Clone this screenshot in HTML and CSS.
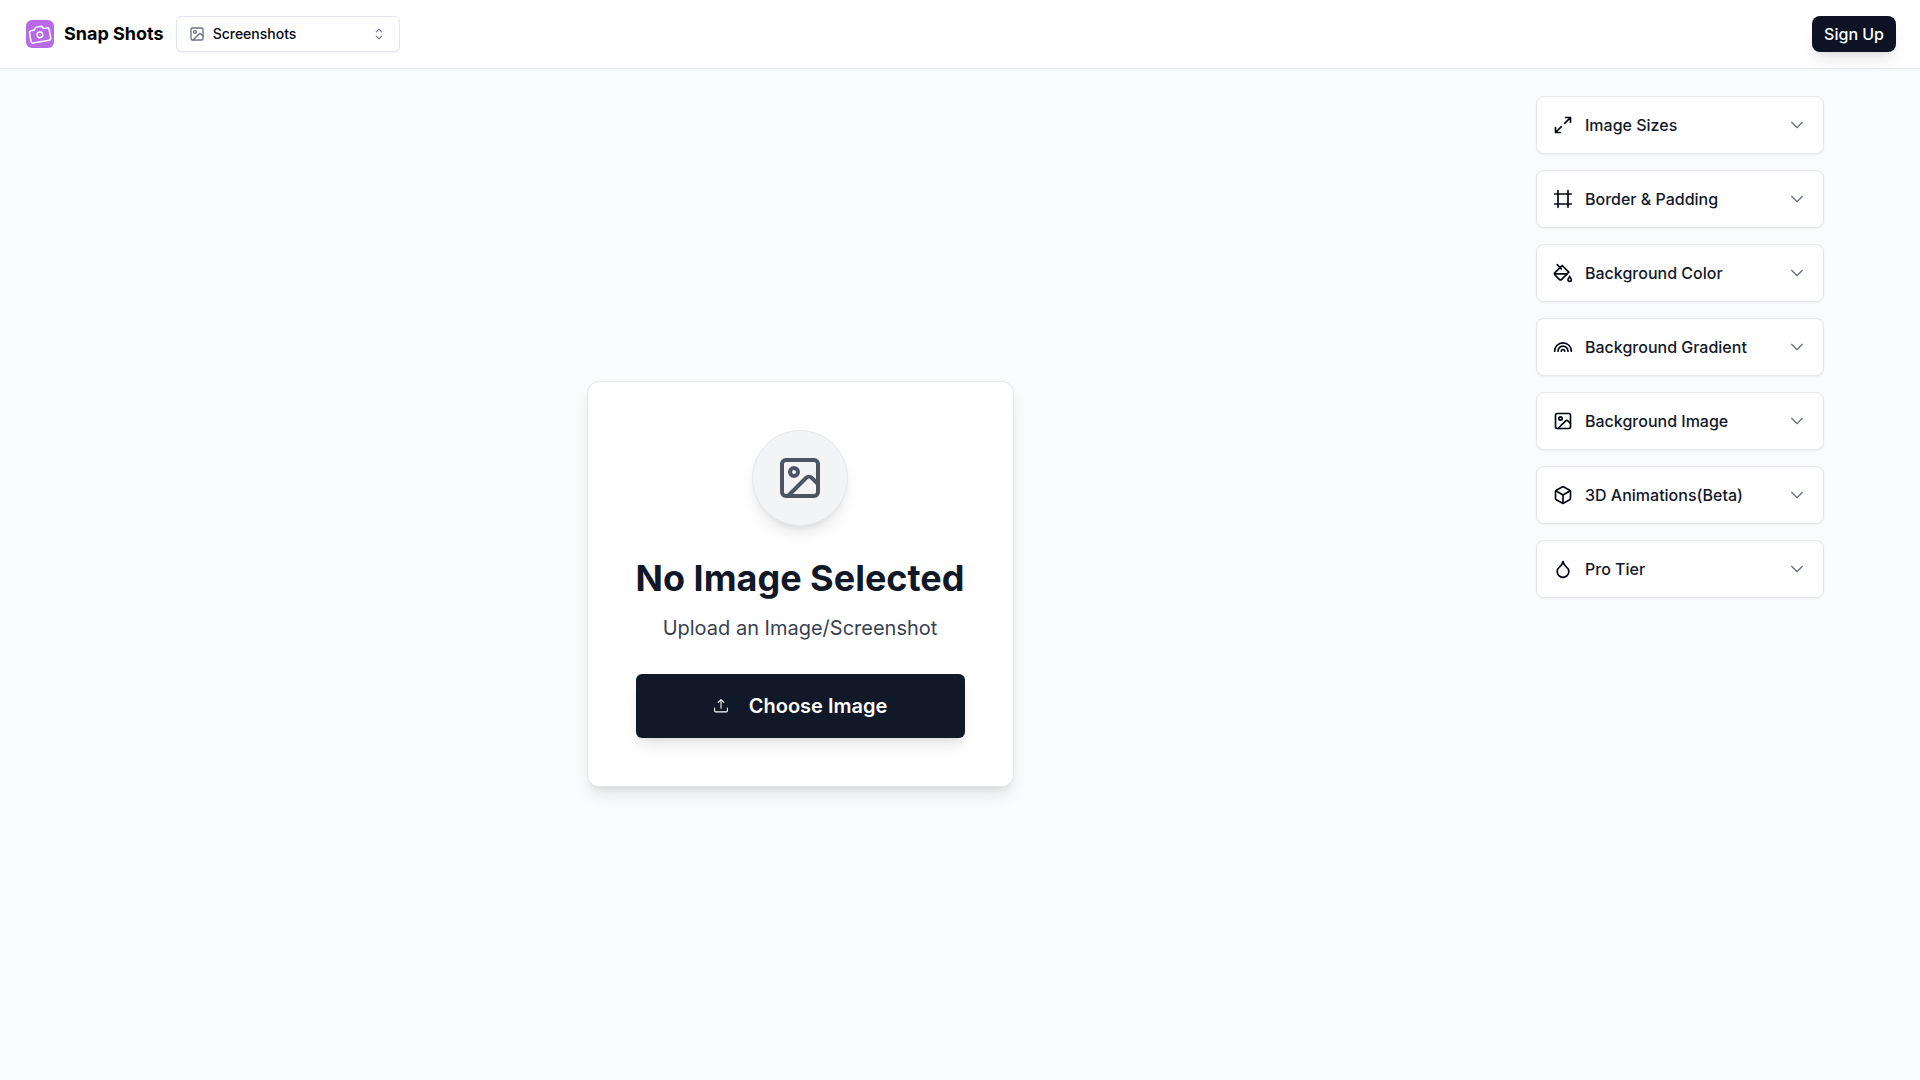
FILE: index.html
```html
<!DOCTYPE html>
<html lang="en">
<head>
    <meta charset="UTF-8">
    <title>Snap Shots</title>
    <meta name="viewport" content="width=device-width, initial-scale=1.0">
    <link rel="stylesheet" href="styles.css">
</head>
<body>
    <header class="navbar">
        <a href="#" class="brand">
            <svg class="logo" viewBox="0 0 28 28">
                <rect class="logo-bg" width="28" height="28" rx="6"/>
                <g transform="rotate(-10 14 15)">
                    <path d="M6 9.2h3.3l1.6-2.5h6.2l1.6 2.5H22a2 2 0 0 1 2 2v8.6a2 2 0 0 1-2 2H6a2 2 0 0 1-2-2v-8.6a2 2 0 0 1 2-2z"/>
                    <circle cx="14" cy="14.8" r="2.8"/>
                </g>
            </svg>
            <span>Snap Shots</span>
        </a>
        <div class="mode">
            <svg class="mode-icon" viewBox="0 0 24 24"><rect x="3" y="3" width="18" height="18" rx="2"/><circle cx="9" cy="9" r="2"/><path d="m21 15-3.1-3.1a2 2 0 0 0-2.8 0L6 21"/></svg>
            <select class="mode-select" aria-label="Mode">
                <option>Screenshots</option>
            </select>
            <svg class="mode-caret" viewBox="0 0 15 15"><path d="m4.9 5.6 2.6-2.6 2.6 2.6M4.9 9.4l2.6 2.6 2.6-2.6"/></svg>
        </div>
        <button type="button" class="signup">Sign Up</button>
    </header>

    <main class="workspace">
        <section class="stage">
            <div class="upload-card">
                <div class="upload-badge">
                    <svg viewBox="0 0 24 24"><rect x="3" y="3" width="18" height="18" rx="2"/><circle cx="9" cy="9" r="2"/><path d="m21 15-3.1-3.1a2 2 0 0 0-2.8 0L6 21"/></svg>
                </div>
                <h1>No Image Selected</h1>
                <p>Upload an Image/Screenshot</p>
                <button type="button" class="choose">
                    <svg viewBox="0 0 15 15"><path d="M4.8 4.2 7.5 1.5l2.7 2.7M7.5 1.6V9.5M1.5 9.5V12a1 1 0 0 0 1 1h10a1 1 0 0 0 1-1V9.5"/></svg>
                    Choose Image
                </button>
            </div>
        </section>

        <aside class="options">
            <button type="button" class="option" aria-expanded="false">
                <svg class="option-icon" viewBox="0 0 24 24"><path d="M15 3h6v6M9 21H3v-6M21 3l-7 7M3 21l7-7"/></svg>
                <span>Image Sizes</span>
                <svg class="chevron" viewBox="0 0 15 15"><path d="m3.5 5.5 4 4 4-4"/></svg>
            </button>
            <button type="button" class="option" aria-expanded="false">
                <svg class="option-icon" viewBox="0 0 24 24"><path d="M22 6H2M22 18H2M6 2v20M18 2v20"/></svg>
                <span>Border &amp; Padding</span>
                <svg class="chevron" viewBox="0 0 15 15"><path d="m3.5 5.5 4 4 4-4"/></svg>
            </button>
            <button type="button" class="option" aria-expanded="false">
                <svg class="option-icon" viewBox="0 0 24 24"><path d="m19 11-8-8-8.6 8.6a2 2 0 0 0 0 2.8l5.2 5.2c.8.8 2 .8 2.8 0L19 11Z"/><path d="m5 2 5 5M2 13h15"/><path d="M22 20a2 2 0 1 1-4 0c0-1.6 1.7-2.4 2-4 .3 1.6 2 2.4 2 4Z"/></svg>
                <span>Background Color</span>
                <svg class="chevron" viewBox="0 0 15 15"><path d="m3.5 5.5 4 4 4-4"/></svg>
            </button>
            <button type="button" class="option" aria-expanded="false">
                <svg class="option-icon" viewBox="0 0 24 24"><path d="M22 17a10 10 0 0 0-20 0M6 17a6 6 0 0 1 12 0M10 17a2 2 0 0 1 4 0"/></svg>
                <span>Background Gradient</span>
                <svg class="chevron" viewBox="0 0 15 15"><path d="m3.5 5.5 4 4 4-4"/></svg>
            </button>
            <button type="button" class="option" aria-expanded="false">
                <svg class="option-icon" viewBox="0 0 24 24"><rect x="3" y="3" width="18" height="18" rx="2"/><circle cx="9" cy="9" r="2"/><path d="m21 15-3.1-3.1a2 2 0 0 0-2.8 0L6 21"/></svg>
                <span>Background Image</span>
                <svg class="chevron" viewBox="0 0 15 15"><path d="m3.5 5.5 4 4 4-4"/></svg>
            </button>
            <button type="button" class="option" aria-expanded="false">
                <svg class="option-icon" viewBox="0 0 24 24"><path d="M21 8a2 2 0 0 0-1-1.7l-7-4a2 2 0 0 0-2 0l-7 4A2 2 0 0 0 3 8v8a2 2 0 0 0 1 1.7l7 4a2 2 0 0 0 2 0l7-4A2 2 0 0 0 21 16Z"/><path d="m3.3 7 8.7 5 8.7-5M12 22V12"/></svg>
                <span>3D Animations(Beta)</span>
                <svg class="chevron" viewBox="0 0 15 15"><path d="m3.5 5.5 4 4 4-4"/></svg>
            </button>
            <button type="button" class="option" aria-expanded="false">
                <svg class="option-icon" viewBox="0 0 24 24"><path d="M12 22a7 7 0 0 0 7-7c0-2-1-3.9-3-5.5s-3.5-4-4-6.5c-.5 2.5-2 4.9-4 6.5C6 11.1 5 13 5 15a7 7 0 0 0 7 7z"/></svg>
                <span>Pro Tier</span>
                <svg class="chevron" viewBox="0 0 15 15"><path d="m3.5 5.5 4 4 4-4"/></svg>
            </button>
        </aside>
    </main>
</body>
</html>
```

FILE: styles.css
```css
* {
    margin: 0;
    padding: 0;
    box-sizing: border-box;
}
body {
    font-family: Inter, "Liberation Sans", sans-serif;
    font-size: 16px;
    line-height: 24px;
    color: #111827;
    background: #fafbfc;
    min-height: 100vh;
    display: flex;
    flex-direction: column;
}
button, select {
    font: inherit;
    color: inherit;
    cursor: pointer;
}
svg {
    flex: none;
    fill: none;
    stroke: currentColor;
    stroke-width: 2;
    stroke-linecap: round;
    stroke-linejoin: round;
}

/* top bar */
.navbar {
    display: flex;
    align-items: center;
    gap: 12px;
    padding: 16px 24px 16px 26px;
    background: #fff;
    border-bottom: 1px solid #e5e7eb;
}
.brand {
    display: flex;
    align-items: center;
    gap: 10px;
    font-size: 18px;
    font-weight: 700;
    color: #000;
    text-decoration: none;
}
.logo {
    width: 28px;
    height: 28px;
    color: #fff;
    stroke-width: 1.5;
}
.logo-bg {
    fill: #b769e6;
    stroke: none;
}
.mode {
    position: relative;
    width: 224px;
}
.mode-select {
    appearance: none;
    display: block;
    width: 100%;
    height: 36px;
    padding: 0 36px;
    font-size: 14px;
    font-weight: 500;
    color: #030712;
    background: #fff;
    border: 1px solid #e2e4f0;
    border-radius: 6px;
    box-shadow: 0 1px 2px rgba(0, 0, 0, 0.05);
}
.mode-icon, .mode-caret {
    position: absolute;
    top: 10px;
    width: 16px;
    height: 16px;
    color: #6b7280;
    pointer-events: none;
}
.mode-icon {
    left: 13px;
}
.mode-caret {
    right: 13px;
    stroke-width: 1;
}
.signup {
    height: 36px;
    margin-left: auto;
    padding: 0 12px;
    font-weight: 500;
    color: #fff;
    background: #0d1324;
    border: none;
    border-radius: 8px;
    box-shadow: 0 10px 15px -3px rgba(0, 0, 0, 0.1), 0 4px 6px -4px rgba(0, 0, 0, 0.1);
}

/* editor area */
.workspace {
    flex: 1;
    display: flex;
    gap: 32px;
    padding: 27px 96px 8px;
}
.stage {
    flex: 1;
    display: flex;
    align-items: center;
    justify-content: center;
}
.upload-card {
    display: flex;
    flex-direction: column;
    align-items: center;
    padding: 48px;
    background: #fff;
    border: 1px solid #e5e7eb;
    border-radius: 12px;
    box-shadow: 0 10px 15px -3px rgba(0, 0, 0, 0.1), 0 4px 6px -4px rgba(0, 0, 0, 0.1);
}
.upload-badge {
    display: flex;
    padding: 23px;
    color: #4b5563;
    background: #f3f4f6;
    border: 1px solid #e5e7eb;
    border-radius: 50%;
    box-shadow: 0 10px 15px -3px rgba(0, 0, 0, 0.1), 0 4px 6px -4px rgba(0, 0, 0, 0.1);
}
.upload-badge svg {
    width: 48px;
    height: 48px;
}
.upload-card h1 {
    margin-top: 32px;
    font-size: 36px;
    line-height: 40px;
    font-weight: 700;
}
.upload-card p {
    margin-top: 16px;
    font-size: 20px;
    line-height: 28px;
    color: #374151;
}
.choose {
    display: flex;
    align-items: center;
    justify-content: center;
    gap: 20px;
    width: 100%;
    height: 64px;
    margin-top: 32px;
    font-size: 20px;
    font-weight: 600;
    color: #fff;
    background: #111827;
    border: none;
    border-radius: 6px;
    box-shadow: 0 10px 15px -3px rgba(0, 0, 0, 0.1), 0 4px 6px -4px rgba(0, 0, 0, 0.1);
}
.choose svg {
    width: 16px;
    height: 16px;
    stroke-width: 1;
}

/* option panels */
.options {
    display: flex;
    flex-direction: column;
    gap: 16px;
    width: 288px;
}
.option {
    display: flex;
    align-items: center;
    gap: 12px;
    height: 58px;
    padding: 0 16px;
    font-weight: 500;
    background: #fff;
    border: 1px solid #e5e7eb;
    border-radius: 8px;
    box-shadow: 0 1px 2px rgba(0, 0, 0, 0.05);
}
.option-icon, .chevron {
    width: 20px;
    height: 20px;
}
.option-icon {
    color: #030712;
}
.chevron {
    margin-left: auto;
    color: #6b7280;
    stroke-width: 1;
}
```
